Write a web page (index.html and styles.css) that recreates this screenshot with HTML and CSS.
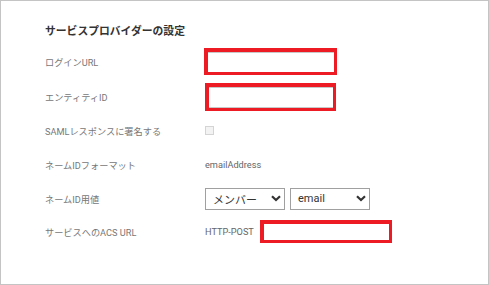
FILE: index.html
```html
<!DOCTYPE html>
<html lang="ja">
<head>
  <meta charset="UTF-8">
  <meta name="viewport" content="width=device-width, initial-scale=1.0">
  <title>サービスプロバイダーの設定</title>
  <link rel="stylesheet" href="styles.css">
</head>
<body>
  <div class="panel">
    <h2 class="title">サービスプロバイダーの設定</h2>
    <div class="form">
      <div class="label">ログインURL</div>
      <div class="value"><input class="field mark first" type="text"></div>

      <div class="label">エンティティID</div>
      <div class="value"><input class="field mark second" type="text"></div>

      <div class="label">SAMLレスポンスに署名する</div>
      <div class="value"><input class="check" type="checkbox" disabled></div>

      <div class="label">ネームIDフォーマット</div>
      <div class="value text">emailAddress</div>

      <div class="label">ネームID用値</div>
      <div class="value">
        <div class="select">
          <span>メンバー</span>
          <svg width="10" height="7" viewBox="0 0 10 7"><path d="M1 1.2 L5 5 L9 1.2" fill="none" stroke="#333" stroke-width="2.2"/></svg>
        </div>
        <div class="select">
          <span>email</span>
          <svg width="10" height="7" viewBox="0 0 10 7"><path d="M1 1.2 L5 5 L9 1.2" fill="none" stroke="#333" stroke-width="2.2"/></svg>
        </div>
      </div>

      <div class="label">サービスへのACS URL</div>
      <div class="value text">HTTP-POST<span class="mark acs"></span></div>
    </div>
  </div>
</body>
</html>
```

FILE: styles.css
```css
body {
  margin: 0;
  font-family: Roboto, "Noto Sans CJK JP", sans-serif;
  background: #fff;
}
.panel {
  box-sizing: border-box;
  width: 489px;
  height: 285px;
  border: 1px solid #c4c4c4;
  padding: 21px 0 0 44px;
}
.title {
  margin: 0 0 3px;
  font-size: 10.8px;
  line-height: 20px;
  font-weight: bold;
  color: #333;
}
.form {
  display: grid;
  grid-template-columns: 160px 1fr;
  grid-template-rows: 34px 35px 33px 35px 33px 33px;
  align-items: center;
}
.label {
  font-size: 9.2px;
  color: #777;
}
.value {
  display: flex;
  align-items: center;
}
.text {
  font-size: 9.2px;
  color: #666;
}
.mark {
  box-sizing: border-box;
  border-style: solid;
  border-color: #ed1c24;
  border-width: 4px 3px 3px 4px;
  background: #fff;
}
.field {
  margin: 0;
  padding: 0;
  outline: none;
  box-shadow: inset 0 1px 0 #c8c8c8;
}
.first {
  width: 133px;
  height: 27px;
  margin-left: -1px;
  margin-top: -1px;
}
.second {
  width: 131px;
  height: 28px;
  box-shadow: inset 0 1px 0 #c8c8c8, inset 0 -1px 0 #c8c8c8;
}
.check {
  appearance: none;
  margin: 0;
  width: 9px;
  height: 9px;
  border: 1px solid #d4d4d4;
  background: #f3f3f3;
}
.select {
  box-sizing: border-box;
  width: 80px;
  height: 22px;
  margin-right: 5px;
  padding: 0 3px 0 7px;
  border: 1px solid #a0a0a0;
  display: flex;
  align-items: center;
  justify-content: space-between;
  font-size: 11px;
  color: #333;
}
.acs {
  display: inline-block;
  width: 132px;
  height: 23px;
  margin-left: 6px;
}
```
